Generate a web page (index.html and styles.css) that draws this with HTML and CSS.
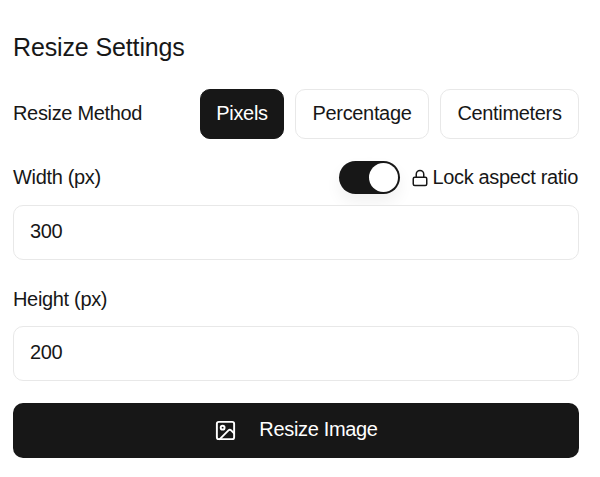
FILE: index.html
```html
<!DOCTYPE html>
<html>
<head>
  <title>Resize Settings</title>
  <meta charset="utf-8">
  <link rel="stylesheet" href="styles.css">
</head>
<body>
  <div class="panel">
    <h2>Resize Settings</h2>

    <div class="method-row">
      <span class="label raised">Resize Method</span>
      <div class="method-buttons">
        <button class="method active">Pixels</button>
        <button class="method">Percentage</button>
        <button class="method">Centimeters</button>
      </div>
    </div>

    <div class="width-head">
      <label class="label raised">Width (px)</label>
      <div class="lock">
        <div class="toggle"><span class="knob"></span></div>
        <svg class="lock-icon" viewBox="0 0 24 24" fill="none" stroke="currentColor" stroke-width="2" stroke-linecap="round" stroke-linejoin="round">
          <rect x="3" y="11" width="18" height="11" rx="2" ry="2"></rect>
          <path d="M7 11V7a5 5 0 0 1 10 0v4"></path>
        </svg>
        <span class="label raised">Lock aspect ratio</span>
      </div>
    </div>
    <input class="field" type="text" value="300">

    <label class="label height-label">Height (px)</label>
    <input class="field" type="text" value="200">

    <button class="submit">
      <svg class="image-icon" viewBox="0 0 24 24" fill="none" stroke="currentColor" stroke-width="2" stroke-linecap="round" stroke-linejoin="round">
        <rect x="3" y="3" width="18" height="18" rx="2" ry="2"></rect>
        <circle cx="9" cy="9" r="2"></circle>
        <path d="m21 15-3.086-3.086a2 2 0 0 0-2.828 0L6 21"></path>
      </svg>
      <span class="submit-text">Resize Image</span>
    </button>
  </div>
</body>
</html>
```

FILE: styles.css
```css
/* General Page Styling */
body {
  font-family: "Liberation Sans", Arial, sans-serif;
  background-color: #fff;
  color: #171717;
  margin: 0;
}

.panel {
  display: flex;
  flex-direction: column;
  padding: 33px 21px 19px 13px;
}

h2 {
  font-size: 25px;
  font-weight: 400;
  letter-spacing: -0.13px;
  line-height: 28px;
  margin: 0 0 28px;
}

.label {
  font-size: 20px;
  letter-spacing: -0.33px;
  line-height: 22px;
}

.raised {
  padding-bottom: 2px;
}

/* Method Buttons */
.method-row {
  display: flex;
  justify-content: space-between;
  align-items: center;
  margin-bottom: 22px;
}

.method-buttons {
  display: grid;
  grid-template-columns: 84px 134px 139px;
  gap: 11px;
}

.method {
  font-family: inherit;
  font-size: 20px;
  letter-spacing: -0.33px;
  height: 50px;
  padding: 0 0 2px;
  color: #171717;
  background-color: #fff;
  border: 1px solid #e8e8e8;
  border-radius: 10px;
}

.method.active {
  background-color: #171717;
  border-color: #171717;
  color: #fff;
}

/* Width Row and Lock Toggle */
.width-head {
  display: flex;
  justify-content: space-between;
  align-items: center;
  margin-bottom: 11px;
}

.lock {
  display: flex;
  align-items: center;
  margin-right: 1px;
}

.toggle {
  display: flex;
  justify-content: flex-end;
  align-items: center;
  width: 61px;
  height: 33px;
  padding: 0 2px;
  box-sizing: border-box;
  background-color: #171717;
  border-radius: 17px;
  box-shadow: 0 8px 16px rgba(0, 0, 0, 0.06);
}

.knob {
  width: 29px;
  height: 29px;
  background-color: #fff;
  border-radius: 50%;
}

.lock-icon {
  width: 18px;
  height: 18px;
  margin: 0 3px 0 11px;
}

/* Inputs */
.field {
  font-family: inherit;
  font-size: 20px;
  letter-spacing: -0.33px;
  color: #171717;
  height: 55px;
  padding: 0 16px 2px;
  box-sizing: border-box;
  border: 1px solid #e8e8e8;
  border-radius: 10px;
  outline: none;
}

.height-label {
  margin: 28px 0 16px;
}

/* Submit Button */
.submit {
  display: flex;
  justify-content: center;
  align-items: center;
  gap: 22px;
  font-family: inherit;
  font-size: 20px;
  letter-spacing: -0.33px;
  height: 55px;
  margin-top: 22px;
  color: #fff;
  background-color: #171717;
  border: none;
  border-radius: 10px;
}

.submit-text {
  padding-bottom: 2px;
}

.image-icon {
  width: 23px;
  height: 23px;
}
```
